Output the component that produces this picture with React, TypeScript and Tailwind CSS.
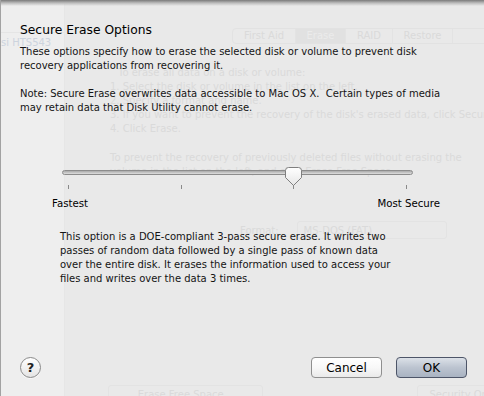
function BackgroundWindow() {
  const tabs = [
    { label: "First Aid", w: "w-[63px]", on: false },
    { label: "Erase", w: "w-[50px]", on: true },
    { label: "RAID", w: "w-[47px]", on: false },
    { label: "Restore", w: "w-[60px]", on: false },
  ];
  return (
    <div className="flex h-full text-[#dadada]">
      {/* sidebar */}
      <div className="w-[65px] shrink-0 bg-[#eeeeee] border-r border-[#e6e6e6] pt-[32px]">
        <div className="border-t border-[#e5e5e5] pt-[4px] pl-[1px] whitespace-nowrap leading-[12px] text-[#cdd4de]">
          si HTS543
        </div>
      </div>

      {/* main pane */}
      <div className="flex-1 flex flex-col">
        <div className="mt-[28px] ml-[167px] flex h-[16px] border border-[#e2e2e2] rounded-[4px] overflow-hidden">
          {tabs.map((t) => (
            <div
              key={t.label}
              className={`${t.w} flex items-center justify-center border-r border-[#e3e3e3] leading-none ${
                t.on ? "bg-[#e1e1e1] text-[#ebebeb]" : ""
              }`}
            >
              {t.label}
            </div>
          ))}
        </div>

        <div className="mt-[22px] pl-[45px] leading-[14px] whitespace-nowrap">
          <div className="pl-[8px]">To erase all data on a disk or volume:</div>
          <div>1. Select the disk or volume in the list on the left.</div>
          <div>2. Specify a format and name.</div>
          <div>3. If you want to prevent the recovery of the disk's erased data, click Security Options.</div>
          <div>4. Click Erase.</div>
          <div className="mt-[15px]">To prevent the recovery of previously deleted files without erasing the</div>
          <div>volume in the list on the left, and click Erase Free Space.</div>
        </div>

        <div className="mt-[42px] flex items-center gap-[18px] pl-[175px]">
          <span>Format:</span>
          <div className="w-[150px] h-[18px] border border-[#e3e3e3] rounded-[3px] pl-[6px] flex items-center">
            MS-DOS (FAT)
          </div>
        </div>

        <div className="mt-auto flex justify-between pl-[43px] pr-[10px] -mb-[8px]">
          <div className="w-[155px] h-[19px] border border-[#e3e3e3] rounded-[3px] flex items-center justify-center">
            Erase Free Space...
          </div>
          <div className="w-[118px] h-[19px] border border-[#e3e3e3] rounded-[3px] flex items-center justify-center">
            Security Options...
          </div>
        </div>
      </div>
    </div>
  );
}

function SliderThumb() {
  return (
    <svg width="19" height="21" viewBox="0 0 19 21" className="absolute -top-[3px] left-[222px]">
      <defs>
        <linearGradient id="thumbFill" x1="0" y1="0" x2="0" y2="1">
          <stop offset="0" stopColor="#ffffff" />
          <stop offset="1" stopColor="#e6e6e6" />
        </linearGradient>
      </defs>
      <path
        d="M1.5 3.5 Q1.5 0.5 4.5 0.5 L14.5 0.5 Q17.5 0.5 17.5 3.5 L17.5 10.5 L9.5 18.5 L1.5 10.5 Z"
        fill="url(#thumbFill)"
        stroke="#7f7f7f"
      />
    </svg>
  );
}

function EraseSheet() {
  return (
    <div className="absolute inset-0 border-l border-[#a2a2a2] flex flex-col pl-[19px] pr-[17px] text-[#141414]">
      <div className="absolute inset-x-0 top-0 h-[6px] bg-gradient-to-b from-[#7b7b7b] via-[#bdbdbd] to-transparent" />

      <h1 className="mt-[22px] text-[12.3px] leading-[16px] text-black">Secure Erase Options</h1>

      <p className="mt-[7px] leading-[14px] whitespace-nowrap">
        These options specify how to erase the selected disk or volume to prevent disk
        <br />
        recovery applications from recovering it.
      </p>
      <p className="mt-[14px] leading-[14px] whitespace-nowrap">
        Note: Secure Erase overwrites data accessible to Mac OS X.&nbsp; Certain types of media
        <br />
        may retain data that Disk Utility cannot erase.
      </p>

      {/* slider */}
      <div className="relative mt-[55px] ml-[42px] w-[351px]">
        <div className="h-[5px] rounded-full border border-[#8c8c8c] bg-gradient-to-b from-[#a9a9a9] to-[#dedede]" />
        <SliderThumb />
        <div className="mt-[10px] px-[6px] flex justify-between">
          {[0, 1, 2, 3].map((i) => (
            <div key={i} className="w-px h-[4px] bg-[#8a8a8a]" />
          ))}
        </div>
      </div>
      <div className="mt-[8px] ml-[32px] w-[388px] flex justify-between leading-[14px] text-[10.2px] text-black">
        <span>Fastest</span>
        <span>Most Secure</span>
      </div>

      <p className="mt-[19px] ml-[40px] leading-[14px] whitespace-nowrap">
        This option is a DOE-compliant 3-pass secure erase. It writes two
        <br />
        passes of random data followed by a single pass of known data
        <br />
        over the entire disk. It erases the information used to access your
        <br />
        files and writes over the data 3 times.
      </p>

      {/* buttons */}
      <div className="mt-auto mb-[18px] flex items-center">
        <div className="w-[21px] h-[21px] rounded-full border border-[#8a8a8a] bg-gradient-to-b from-white to-[#e4e4e4] flex items-center justify-center text-[13px] font-bold leading-none text-[#222] shadow-[0_1px_0_rgba(255,255,255,0.6)]">
          ?
        </div>
        <div className="flex-1" />
        <button className="w-[71px] h-[21px] rounded-[4px] border border-[#8f8f8f] bg-gradient-to-b from-white via-[#f8f8f8] to-[#eaeaea] text-[12px] leading-none text-black">
          Cancel
        </button>
        <button className="ml-[14px] w-[71px] h-[21px] rounded-[4px] border border-[#4d5568] bg-gradient-to-b from-[#dce1e8] via-[#bcc4d0] to-[#a9b3c2] text-[12px] leading-none text-black">
          OK
        </button>
      </div>
    </div>
  );
}

export default function App() {
  return (
    <div className="relative w-[484px] h-[396px] overflow-hidden bg-[#e9e9e9] font-['DejaVu_Sans',sans-serif] text-[10px]">
      <BackgroundWindow />
      <EraseSheet />
    </div>
  );
}
